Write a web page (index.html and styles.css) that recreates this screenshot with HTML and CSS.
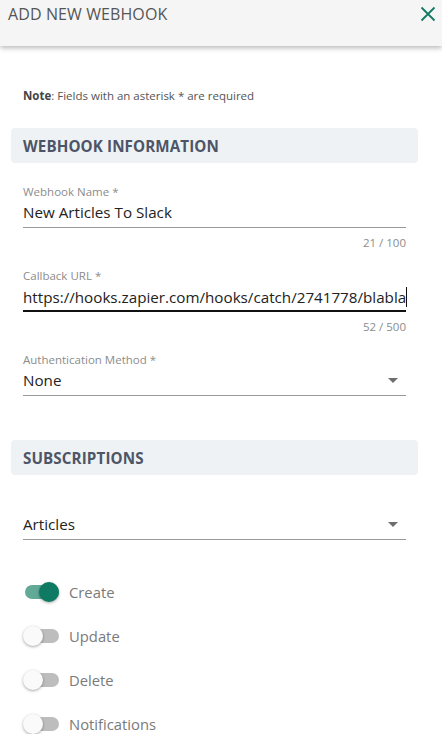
FILE: index.html
```html
<!DOCTYPE html>
<html>
<head>
<meta charset="utf-8">
<link rel="stylesheet" href="styles.css">
</head>
<body>
<div class="header">
  <div class="title">ADD NEW WEBHOOK</div>
  <svg class="close" width="16" height="16" viewBox="0 0 16 16"><path d="M1.5 1.5L14.5 14.5M14.5 1.5L1.5 14.5" stroke="#137a63" stroke-width="1.8" fill="none"/></svg>
</div>
<div class="content">
  <div class="note"><b>Note</b>: Fields with an asterisk * are required</div>
  <div class="section">WEBHOOK INFORMATION</div>
  <div class="fields">
    <div class="field">
      <div class="label">Webhook Name *</div>
      <div class="input">New Articles To Slack</div>
      <div class="counter">21 / 100</div>
    </div>
    <div class="field">
      <div class="label">Callback URL *</div>
      <div class="input focused">https://hooks.zapier.com/hooks/catch/2741778/blabla<span class="caret"></span></div>
      <div class="counter">52 / 500</div>
    </div>
    <div class="field select last">
      <div class="label">Authentication Method *</div>
      <div class="input">None<span class="arrow"></span></div>
    </div>
  </div>
  <div class="section sub">SUBSCRIPTIONS</div>
  <div class="fields plain">
    <div class="field select last">
      <div class="input">Articles<span class="arrow"></span></div>
    </div>
  </div>
  <div class="toggles">
    <div class="toggle on"><span class="track"><span class="thumb"></span></span><span class="tlabel">Create</span></div>
    <div class="toggle"><span class="track"><span class="thumb"></span></span><span class="tlabel">Update</span></div>
    <div class="toggle"><span class="track"><span class="thumb"></span></span><span class="tlabel">Delete</span></div>
    <div class="toggle"><span class="track"><span class="thumb"></span></span><span class="tlabel">Notifications</span></div>
  </div>
</div>
</body>
</html>
```
FILE: styles.css
```css
* { box-sizing: border-box; }
body {
  margin: 0;
  font-family: "Open Sans", "Segoe UI", sans-serif;
  background: #fff;
  color: #222;
}
.header {
  height: 46px;
  background: #f5f5f5;
  display: flex;
  justify-content: space-between;
  align-items: flex-start;
  padding: 3px 6px 0 8px;
  box-shadow: 0 2px 5px rgba(0,0,0,0.28);
  position: relative;
}
.title {
  font-size: 16px;
  line-height: 22px;
  color: #555;
  letter-spacing: 0.1px;
}
.close { margin-top: 3px; }
.content { padding: 40px 24px 0 11px; }
.note {
  font-size: 11.5px;
  color: #555;
  padding-left: 12px;
  height: 20px;
  line-height: 20px;
}
.note b { color: #444; }
.section {
  margin-top: 22px;
  height: 35px;
  background: #eef2f5;
  border-radius: 4px;
  display: flex;
  align-items: center;
  padding-left: 12px;
  font-weight: 700;
  font-size: 15.2px;
  color: #4d5566;
  letter-spacing: 0.1px;
}
.section.sub { margin-top: 44px; }
.fields { padding: 21px 12px 0 12px; }
.fields.plain { padding-top: 37px; }
.field { margin-bottom: 18px; }
.field.last { margin-bottom: 0; }
.label {
  font-size: 11.5px;
  color: #8c8c8c;
  line-height: 16px;
}
.input {
  font-size: 15.2px;
  color: #222;
  height: 28px;
  line-height: 24px;
  border-bottom: 1px solid #999;
  position: relative;
  white-space: nowrap;
}
.input.focused { border-bottom: 2px solid #111; line-height: 26px; }
.caret { display: inline-block; width: 1px; height: 20px; background: #111; vertical-align: middle; margin-top: -3px; }
.counter {
  text-align: right;
  font-size: 11.5px;
  color: #8c8c8c;
  line-height: 14px;
  margin-top: 8px;
}
.arrow {
  position: absolute;
  right: 8px;
  top: 10px;
  width: 0; height: 0;
  border-left: 5px solid transparent;
  border-right: 5px solid transparent;
  border-top: 5px solid #6e6e6e;
}
.toggles { padding-left: 14px; padding-top: 42px; display: flex; flex-direction: column; gap: 24px; }
.toggle { display: flex; align-items: center; height: 20px; }
.track {
  width: 34px; height: 14px; border-radius: 7px;
  background: #bdbdbd;
  position: relative;
  margin-right: 10px;
}
.thumb {
  position: absolute; top: -3px; left: -2px;
  width: 20px; height: 20px; border-radius: 50%;
  background: #fafafa;
  box-shadow: 0 1px 3px rgba(0,0,0,0.35);
}
.toggle.on .track { background: #62a997; }
.toggle.on .thumb { left: 14px; background: #0f7a63; }
.tlabel { font-size: 14.8px; color: #7a7a7a; }
```
